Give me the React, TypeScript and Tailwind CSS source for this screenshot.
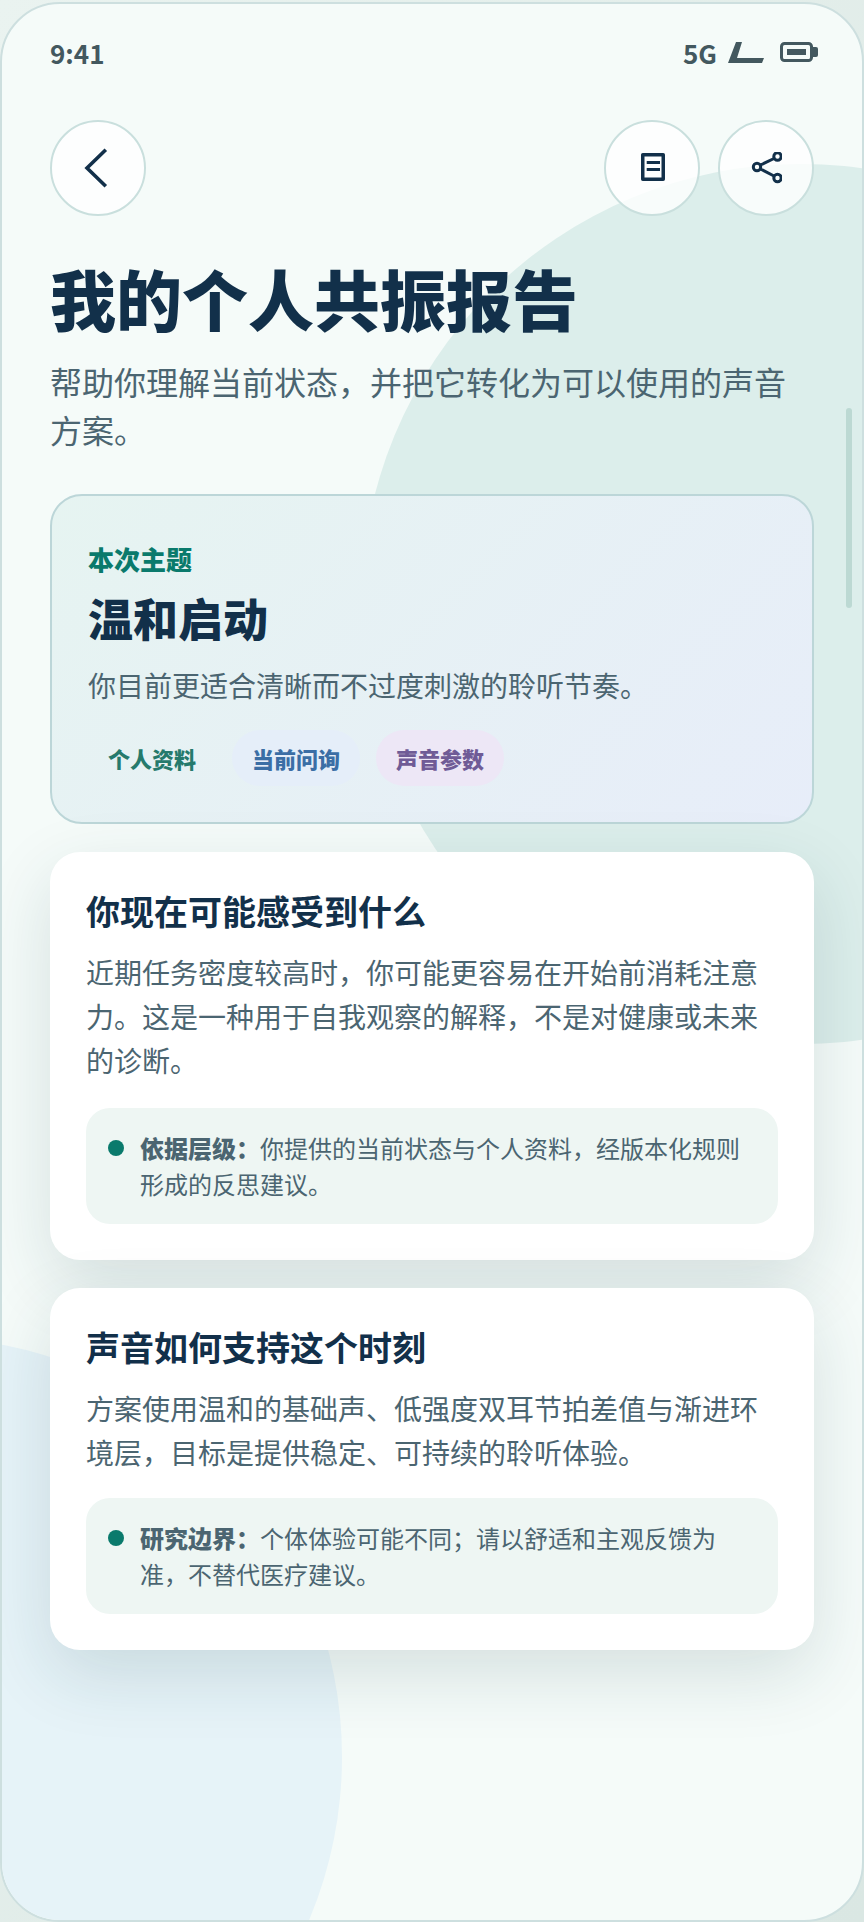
const cjk = "font-['Noto_Sans_CJK_SC','Noto_Sans',sans-serif]";

function IconButton({ children }: { children: React.ReactNode }) {
  return (
    <button className="flex h-[96px] w-[96px] items-center justify-center rounded-full border-2 border-[#c9dfdd] bg-white/80">
      {children}
    </button>
  );
}

function Tag({ label, className }: { label: string; className: string }) {
  return (
    <span className={`flex h-[56px] w-[128px] items-center justify-center rounded-full text-[22px] font-extrabold ${className}`}>
      {label}
    </span>
  );
}

type InfoCardProps = { title: string; body: string; noteTitle: string; note: string; noteMargin: string };

function InfoCard({ title, body, noteTitle, note, noteMargin }: InfoCardProps) {
  return (
    <section className="rounded-[30px] bg-white px-[36px] pt-[35px] pb-[36px] shadow-[0_24px_70px_rgba(22,62,72,0.14)]">
      <h2 className="text-[34px] leading-[48px] font-bold text-[#12304a]">{title}</h2>
      <p className="mt-[15px] text-[28px] leading-[44px] text-[#4b6571]">{body}</p>
      <div className={`${noteMargin} flex gap-[16px] rounded-[24px] bg-[#eef6f3] px-[22px] py-[22px]`}>
        <span className="mt-[10px] h-[16px] w-[16px] shrink-0 rounded-full bg-[#0a7a6c]" />
        <p className="text-[24px] leading-[36px] text-[#4b6571]">
          <strong className="font-extrabold">{noteTitle}</strong>
          {note}
        </p>
      </div>
    </section>
  );
}

export default function App() {
  return (
    <div className={`h-[1922px] w-[864px] bg-gradient-to-br from-[#eaf3f0] to-[#dae7e3] pt-[2px] ${cjk}`}>
      <div className="relative h-[1920px] w-full overflow-hidden rounded-[60px] border-2 border-[#cddfdf] bg-[#f5fbf9]">
        {/* background blobs */}
        <div className="absolute top-[160px] left-[359px] h-[880px] w-[880px] rounded-full bg-[#dceeeb]" />
        <div className="absolute top-[1333px] left-[-500px] h-[840px] w-[840px] rounded-full bg-[#e6f3f8]" />
        {/* scrollbar */}
        <div className="absolute top-[404px] right-[10px] h-[200px] w-[6px] rounded-full bg-[#bcd9d3]" />

        <div className="relative px-[48px]">
          <div className="flex h-[94px] items-center justify-between pt-[2px] text-[26px] text-[#43585f]">
            <span className="font-bold">9:41</span>
            <div className="flex items-center">
              <span className="font-bold">5G</span>
              <svg className="ml-[11px]" width="36" height="21" viewBox="0 0 36 21" fill="#43585f">
                <path d="M8 0h6L9 16h27l-2 5H0z" />
              </svg>
              <svg className="mr-[-4px] ml-[16px]" width="38" height="20" viewBox="0 0 38 20">
                <rect x="1.5" y="1.5" width="30" height="17" rx="3" fill="none" stroke="#43585f" strokeWidth="3" />
                <rect x="7" y="7" width="19" height="6" fill="#43585f" />
                <path d="M33 5h3a2 2 0 0 1 2 2v6a2 2 0 0 1-2 2h-3z" fill="#43585f" />
              </svg>
            </div>
          </div>

          <div className="mt-[22px] flex justify-between">
            <IconButton>
              <svg width="28" height="40" viewBox="0 0 28 40" fill="none" stroke="#12304a" strokeWidth="3.6" strokeLinecap="square">
                <path d="M20.5 3 3 20l17.5 17" />
              </svg>
            </IconButton>
            <div className="flex gap-[18px]">
              <IconButton>
                <svg width="28" height="30" viewBox="0 0 28 30" fill="none" stroke="#12304a">
                  <path d="M4.75 1.75h20.5v24.5H4.75z" strokeWidth="3.5" strokeLinejoin="round" />
                  <path d="M8.7 9.5H22M8.7 16.5H22" strokeWidth="3" />
                </svg>
              </IconButton>
              <IconButton>
                <svg width="32" height="32" viewBox="0 0 32 32" fill="none" stroke="#12304a" strokeWidth="3">
                  <circle cx="7" cy="15" r="3.7" />
                  <circle cx="27.5" cy="4.5" r="3.7" />
                  <circle cx="27.5" cy="26" r="3.7" />
                  <path d="m10.5 13 13.5-6.5M10.5 17 24 24" />
                </svg>
              </IconButton>
            </div>
          </div>

          <h1 className="mt-[41px] text-[66px] leading-[80px] font-extrabold text-[#12304a]">我的个人共振报告</h1>
          <p className="mt-[20px] text-[32px] leading-[48px] text-[#4b6571]">帮助你理解当前状态，并把它转化为可以使用的声音方案。</p>

          <section className="mt-[41px] h-[330px] rounded-[32px] border-2 border-[#bcd6d8] bg-[linear-gradient(135deg,#e6f4f1,#e7edf9)] px-[36px] pt-[47px]">
            <div className="text-[26px] leading-[32px] font-extrabold text-[#0a7a6c]">本次主题</div>
            <div className="mt-[13px] text-[45px] leading-[60px] font-extrabold text-[#12304a]">温和启动</div>
            <p className="mt-[17px] text-[28px] leading-[40px] text-[#4b6571]">你目前更适合清晰而不过度刺激的聆听节奏。</p>
            <div className="mt-[25px] flex gap-[16px]">
              <Tag label="个人资料" className="bg-transparent text-[#257a6c]" />
              <Tag label="当前问询" className="bg-[#e5eef9] text-[#3b6ea5]" />
              <Tag label="声音参数" className="bg-[#ede7f6] text-[#6f5b96]" />
            </div>
          </section>

          <div className="mt-[28px] flex flex-col gap-[28px]">
            <InfoCard
              title="你现在可能感受到什么"
              body="近期任务密度较高时，你可能更容易在开始前消耗注意力。这是一种用于自我观察的解释，不是对健康或未来的诊断。"
              noteTitle="依据层级："
              note="你提供的当前状态与个人资料，经版本化规则形成的反思建议。"
              noteMargin="mt-[26px]"
            />
            <InfoCard
              title="声音如何支持这个时刻"
              body="方案使用温和的基础声、低强度双耳节拍差值与渐进环境层，目标是提供稳定、可持续的聆听体验。"
              noteTitle="研究边界："
              note="个体体验可能不同；请以舒适和主观反馈为准，不替代医疗建议。"
              noteMargin="mt-[24px]"
            />
          </div>
        </div>
      </div>
    </div>
  );
}
